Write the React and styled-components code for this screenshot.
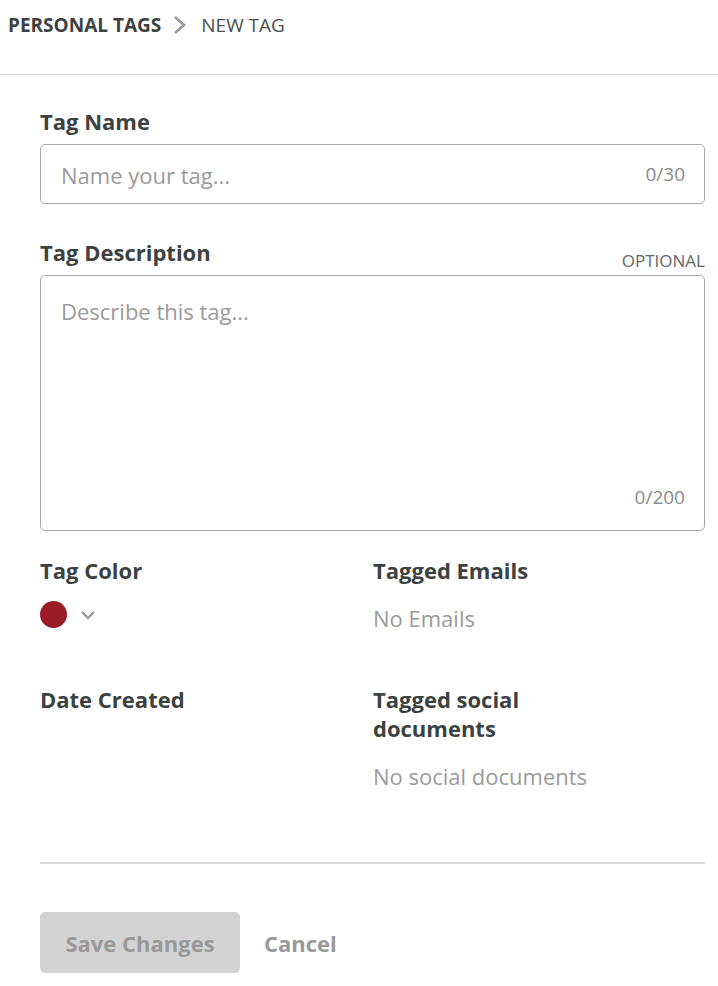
import React from 'react';
import styled, { createGlobalStyle } from 'styled-components';

const GlobalStyle = createGlobalStyle`
  body {
    margin: 0;
    background: #fff;
    font-family: "Open Sans", "Liberation Sans", sans-serif;
    color: #3c4241;
  }
`;

const Page = styled.div`
  width: 718px;
`;

const Breadcrumb = styled.div`
  display: flex;
  align-items: center;
  box-sizing: border-box;
  height: 75px;
  padding: 12px 8px 36px;
  border-bottom: 1px solid #d6d6d6;
  margin-bottom: 32px;
  font-size: 19px;
  line-height: 26px;
  text-transform: uppercase;
`;

const Crumb = styled.span`
  font-weight: ${(p) => (p.$current ? 400 : 700)};
  color: ${(p) => (p.$current ? '#4a4f4e' : '#3c4241')};
`;

const Chevron = styled.svg`
  width: 14px;
  height: 20px;
  margin: 0 14px 0 12px;
`;

const Form = styled.div`
  padding: 0 13px 0 40px;
`;

const LabelRow = styled.div`
  display: flex;
  justify-content: space-between;
  align-items: flex-end;
  margin-bottom: 8px;
`;

const Label = styled.div`
  font-size: 22px;
  font-weight: 700;
  line-height: 29px;
  color: #3c4241;
`;

const Optional = styled.span`
  font-size: 17px;
  color: #666;
  line-height: 20px;
  margin-bottom: -4px;
`;

const Field = styled.div`
  position: relative;
  border: 1px solid #a9a9a9;
  border-radius: 5px;
  height: ${(p) => p.$height}px;
  box-sizing: border-box;
  margin-bottom: ${(p) => p.$gap}px;
`;

const Placeholder = styled.div`
  position: absolute;
  left: 20px;
  top: ${(p) => p.$top}px;
  font-size: 22px;
  line-height: 30px;
  color: #9a9a9a;
`;

const Counter = styled.div`
  position: absolute;
  right: 19px;
  ${(p) => (p.$bottom ? `bottom: ${p.$bottom}px;` : 'top: 50%; transform: translateY(-50%);')}
  font-size: 19px;
  line-height: 26px;
  color: #8a8a8a;
`;

const Grid = styled.div`
  display: grid;
  grid-template-columns: 333px 1fr;
  row-gap: 52px;
`;

const Cell = styled.div`
  display: flex;
  flex-direction: column;
`;

const Empty = styled.div`
  font-size: 22px;
  line-height: 30px;
  color: #9a9a9a;
  margin-top: 18px;
`;

const ColorPicker = styled.div`
  display: flex;
  align-items: center;
  gap: 13px;
  margin-top: 16px;
`;

const Swatch = styled.div`
  width: 27px;
  height: 27px;
  border-radius: 50%;
  background: ${(p) => p.$color};
`;

const Divider = styled.hr`
  border: none;
  border-top: 2px solid #d8d8d8;
  margin: 71px 0 48px;
`;

const Actions = styled.div`
  display: flex;
  align-items: center;
  gap: 24px;
`;

const SaveButton = styled.button`
  width: 200px;
  height: 61px;
  border: none;
  border-radius: 5px;
  background: #d3d3d3;
  color: #999;
  font-family: inherit;
  font-size: 22px;
  font-weight: 700;
`;

const CancelButton = styled.button`
  border: none;
  background: none;
  padding: 0;
  color: #999;
  font-family: inherit;
  font-size: 22px;
  font-weight: 700;
`;

export default function App() {
  return (
    <Page>
      <GlobalStyle />
      <Breadcrumb>
        <Crumb>Personal Tags</Crumb>
        <Chevron viewBox="0 0 14 20">
          <path d="M2 2 L11 10 L2 18" fill="none" stroke="#9a9a9a" strokeWidth="2.6" />
        </Chevron>
        <Crumb $current>New Tag</Crumb>
      </Breadcrumb>
      <Form>
        <LabelRow>
          <Label>Tag Name</Label>
        </LabelRow>
        <Field $height={60} $gap={34}>
          <Placeholder $top={15}>Name your tag...</Placeholder>
          <Counter>0/30</Counter>
        </Field>
        <LabelRow>
          <Label>Tag Description</Label>
          <Optional>OPTIONAL</Optional>
        </LabelRow>
        <Field $height={256} $gap={25}>
          <Placeholder $top={20}>Describe this tag...</Placeholder>
          <Counter $bottom={20}>0/200</Counter>
        </Field>
        <Grid>
          <Cell>
            <Label>Tag Color</Label>
            <ColorPicker>
              <Swatch $color="#9b1c26" />
              <svg width="16" height="10" viewBox="0 0 16 10">
                <path d="M2 2 L8 8 L14 2" fill="none" stroke="#9a9a9a" strokeWidth="2.4" />
              </svg>
            </ColorPicker>
          </Cell>
          <Cell>
            <Label>Tagged Emails</Label>
            <Empty>No Emails</Empty>
          </Cell>
          <Cell>
            <Label>Date Created</Label>
          </Cell>
          <Cell>
            <Label>Tagged social<br />documents</Label>
            <Empty>No social documents</Empty>
          </Cell>
        </Grid>
        <Divider />
        <Actions>
          <SaveButton>Save Changes</SaveButton>
          <CancelButton>Cancel</CancelButton>
        </Actions>
      </Form>
    </Page>
  );
}
